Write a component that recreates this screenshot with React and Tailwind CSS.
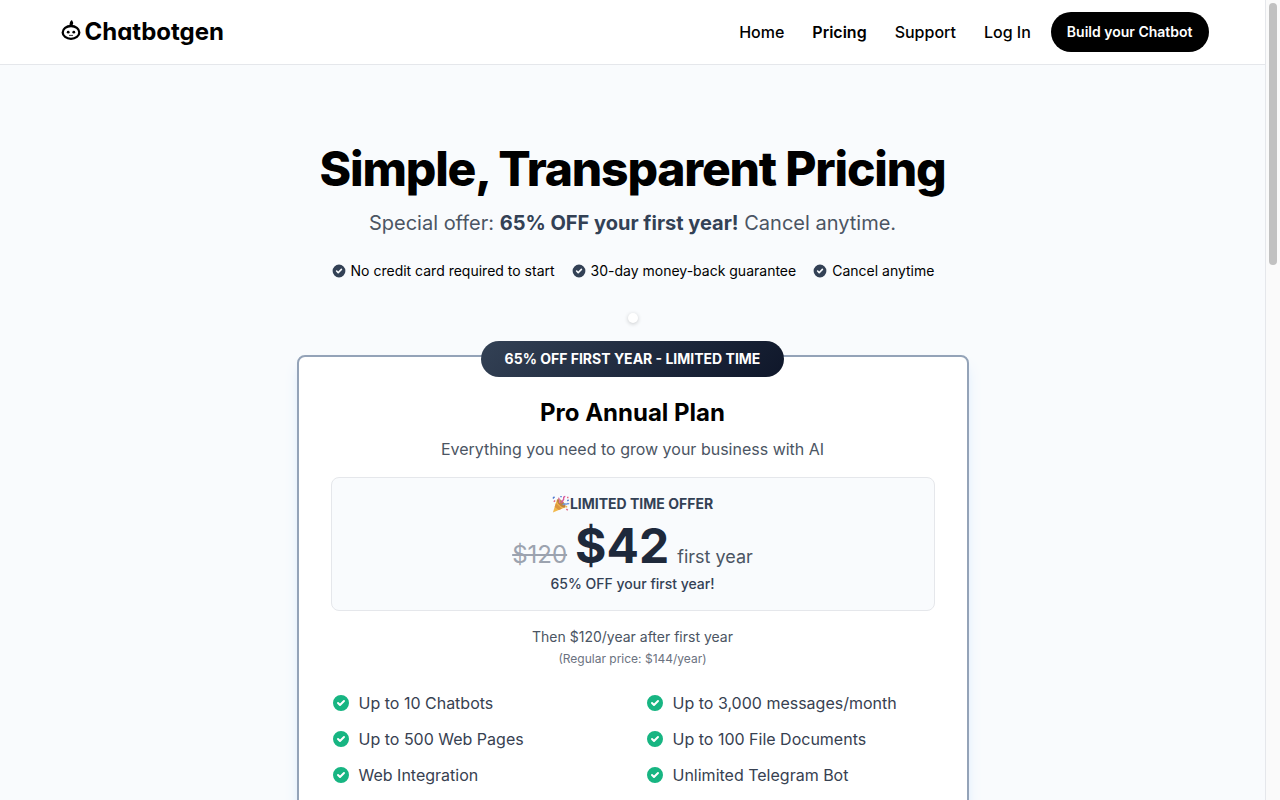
import { HiCheckCircle } from 'react-icons/hi';

const navLinks = [
  { label: 'Home', href: '#home' },
  { label: 'Pricing', href: '#pricing', active: true },
  { label: 'Support', href: '#support' },
  { label: 'Log In', href: '#login' },
];

const perks = [
  'No credit card required to start',
  '30-day money-back guarantee',
  'Cancel anytime',
];

const features = [
  'Up to 10 Chatbots',
  'Up to 3,000 messages/month',
  'Up to 500 Web Pages',
  'Up to 100 File Documents',
  'Web Integration',
  'Unlimited Telegram Bot',
];

const BotIcon = () => (
  <svg viewBox="0 0 20 20" className="w-5 h-6 pb-1" fill="none" aria-hidden="true">
    <ellipse cx="10" cy="12.400" rx="8.300" ry="6.400" stroke="black" strokeWidth="2.300" />
    <path d="M8.600 6.400V4c0-1.500.8-3 2.400-4 .1 1.300 1.200 1.500 1.200 2.900 0 .9-.7 1.400-.7 3.500z" fill="black" />
    <circle cx="7.200" cy="12.200" r="1.400" fill="black" />
    <circle cx="12.800" cy="12.200" r="1.400" fill="black" />
    <path d="M8.400 15.400h3.200" stroke="black" strokeWidth=".8" strokeLinecap="round" />
  </svg>
);

const PartyIcon = () => (
  <svg viewBox="0 0 20 20" className="w-[18px] h-[18px]" fill="none" aria-hidden="true">
    <path d="M5.500 5 1 19.500 15 13.500z" fill="#f2b84b" />
    <path d="M4.400 8.800 3 13.200l4.600 3.400 3.400-1.400z" fill="#dc9540" />
    <ellipse cx="10.300" cy="9.200" rx="2.800" ry="6.200" transform="rotate(-45 10.300 9.200)" fill="#bd8240" />
    <path d="M8.500 9c.4-2.400.2-4.400-1.400-6" stroke="#dc7aa0" strokeWidth="1.600" />
    <path d="M11 9c-.4-3 2.600-3 2-5.500-.2-1 .6-1.800 1.800-2" stroke="#d65a9c" strokeWidth="1.600" />
    <path d="M12 11c2-2.400 3.200 0 4.800-1.200.8-.6 1.400-.4 2.200.2" stroke="#6f98dc" strokeWidth="1.600" />
    <path d="M1 4 2.800 2M17 6.500l1.500-1M10 2.500V1" stroke="#4e78d0" strokeWidth="1.600" />
    <path d="M17.500 2v1.500M2 7.500 3.500 6M16 15.500l1.500 1.500" stroke="#e0627e" strokeWidth="1.600" />
    <circle cx="16" cy="13" r="1" fill="#f2b84b" />
  </svg>
);

const Header = () => (
  <header className="bg-white border-b border-gray-200">
    <div className="max-w-6xl h-16 mx-auto flex items-center justify-between">
      <a href="#home" className="flex items-center gap-1 pl-1">
        <BotIcon />
        <span className="text-2xl font-bold [font-feature-settings:'cv11']">Chatbotgen</span>
      </a>
      <nav className="flex items-center gap-5">
        <div className="flex items-center gap-7">
          {navLinks.map((link) => (
            <a
              key={link.label}
              href={link.href}
              className={link.active ? 'font-semibold' : 'font-medium'}
            >
              {link.label}
            </a>
          ))}
        </div>
        <button
          type="button"
          className="h-10 px-4 rounded-full bg-black text-white text-sm font-semibold"
        >
          Build your Chatbot
        </button>
      </nav>
    </div>
  </header>
);

const PricingCard = () => (
  <section className="relative w-full max-w-2xl mx-auto mt-8 px-8 pt-10 pb-8 bg-white border-2 border-[#94a3b8] rounded-lg shadow-lg shadow-blue-200/60 text-center">
    <div className="absolute -top-4 inset-x-0 flex justify-center">
      <span className="px-6 py-2 rounded-full bg-linear-135 from-[#334155] to-[#0f172a] text-white text-sm font-bold">
        65% OFF FIRST YEAR - LIMITED TIME
      </span>
    </div>

    <h2 className="text-2xl font-bold">Pro Annual Plan</h2>
    <p className="mt-2 text-[#4b5563]">Everything you need to grow your business with AI</p>

    <div className="mt-4 p-4 bg-[#f9fbfd] border border-gray-200 rounded-lg">
      <div className="flex items-center justify-center text-sm font-bold text-[#334155]">
        <PartyIcon />
        LIMITED TIME OFFER
      </div>
      <div className="mt-2 h-12 flex items-baseline justify-center gap-2">
        <span className="text-2xl text-[#9ca3af] line-through">$120</span>
        <span className="text-5xl leading-none font-bold text-[#1e293b]">$42</span>
        <span className="text-lg text-[#4b5563]">first year</span>
      </div>
      <p className="mt-1 text-sm font-medium text-[#334155]">65% OFF your first year!</p>
    </div>

    <p className="mt-4 text-sm text-[#4b5563]">Then $120/year after first year</p>
    <p className="mt-1 text-xs text-[#6b7280]">(Regular price: $144/year)</p>

    <ul className="mt-6 grid grid-cols-2 gap-x-6 gap-y-3 text-left text-[#374151]">
      {features.map((feature) => (
        <li key={feature} className="flex items-center gap-2">
          <HiCheckCircle className="w-5 h-5 text-[#17b582]" />
          {feature}
        </li>
      ))}
    </ul>
  </section>
);

const App = () => (
  <div className="h-screen flex overflow-hidden font-['Inter',sans-serif] text-black">
    <div className="flex-1 min-w-0 overflow-hidden bg-[#f9fbfd]">
      <Header />
      <main className="pt-20 text-center">
        <h1 className="text-5xl font-extrabold tracking-tight">Simple, Transparent Pricing</h1>
        <p className="mt-4 text-xl text-[#4b5563]">
          Special offer: <strong className="text-[#334155]">65% OFF your first year!</strong> Cancel
          anytime.
        </p>
        <ul className="mt-6 flex justify-center gap-4 text-sm">
          {perks.map((perk) => (
            <li key={perk} className="flex items-center gap-1">
              <HiCheckCircle className="w-4 h-4 text-[#334155]" />
              {perk}
            </li>
          ))}
        </ul>
        <div className="mt-8 mx-auto w-[10px] h-[10px] rounded-full bg-white shadow-[0_1px_4px_rgba(0,0,0,0.2)]" />
        <PricingCard />
      </main>
    </div>
    <div className="w-[15px] px-[3px] py-[3px] bg-[#fafafa] border-l border-gray-200">
      <div className="w-2 h-[33%] rounded-full bg-[#c1c1c1]" />
    </div>
  </div>
);

export default App;
